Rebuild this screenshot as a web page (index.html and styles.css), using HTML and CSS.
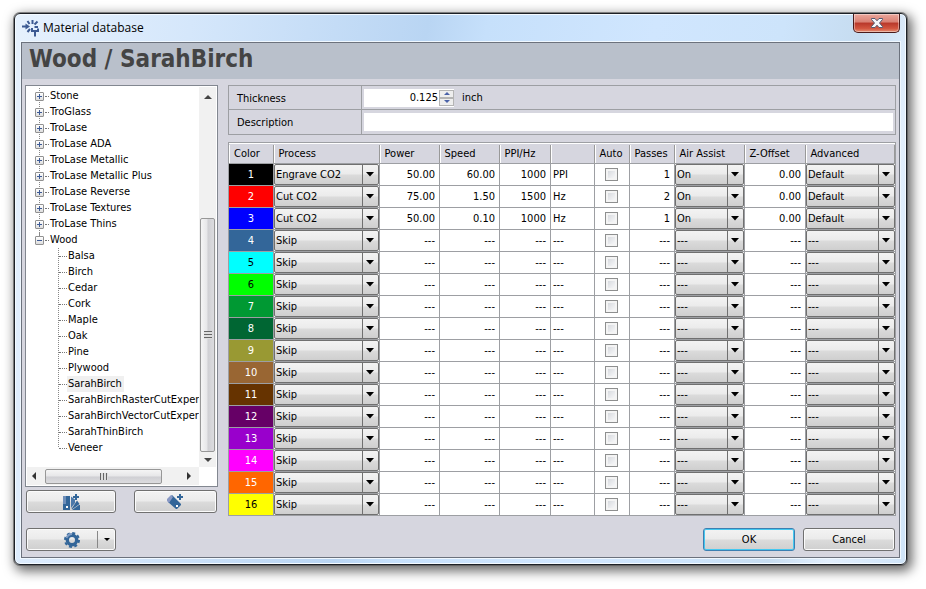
FILE: index.html
```html
<!DOCTYPE html>
<html lang="en">
<head>
<meta charset="utf-8">
<title>Material database</title>
<link rel="stylesheet" href="styles.css">
</head>
<body>
<main class="window">
  <header class="titlebar">
    <svg class="app-icon" width="17" height="17" viewBox="0 0 17 17" aria-hidden="true">
      <g fill="none" stroke="#3d5a92" stroke-width="2">
        <path d="M0 6.500h6M10.500 0v4M5.500 1l2 3M15.500 1.500l-3 3M12.500 7H16M5.500 12l2.500-3M13 11.500v5"/>
        <path d="M10 8v3h6V8.500"/>
      </g>
      <path d="M3.500 3.500l4.500 3-4.500 3z" fill="#3d5a92"/>
    </svg>
    <h1 class="title">Material database</h1>
    <button class="close" type="button" aria-label="Close">
      <svg width="12" height="10" viewBox="0 0 12 10" aria-hidden="true">
        <path d="M.5.5h3.500l2 2.300 2-2.300h3.500v1L8.500 5l3 3.500v1H8L6 7.200 4 9.500H.5v-1L3.500 5l-3-3.500z" fill="#f4f4f8" stroke="#545a70"/>
      </svg>
    </button>
  </header>
  <div class="client">
    <h2 class="heading">Wood / SarahBirch</h2>
    <div class="body">
      <aside class="side">
        <div class="tree-box">
          <ul class="tree" id="tree"></ul>
          <div class="vbar">
            <i class="arrow up"></i>
            <div class="vthumb"><i class="grip"></i></div>
            <i class="arrow down"></i>
          </div>
          <div class="hbar">
            <i class="arrow left"></i>
            <div class="hthumb"><i class="grip"></i></div>
            <i class="arrow right"></i>
          </div>
        </div>
        <div class="side-actions">
          <button class="btn add-material" type="button" aria-label="Add material">
            <svg width="17" height="16" viewBox="0 0 17 16" aria-hidden="true">
              <path d="M0 2h7v14H0z" fill="#336699"/>
              <path d="M0 2h3v8H0z" fill="#6f8fba"/>
              <path d="M8 2.500l4 3V9l-4 5z" fill="#4b78a9"/>
              <path d="M8.500 15l5.500-8.500 2.500 3.500-7 5z" fill="#336699"/>
              <path d="M9 16l7-5h1v5z" fill="#336699"/>
              <path d="M3 12h2v2H3z" fill="#fff"/>
              <path d="M12 0h2v2h2v2h-2v2h-2V4h-2V2h2z" fill="#336699"/>
            </svg>
          </button>
          <button class="btn add-thickness" type="button" aria-label="Add thickness">
            <svg width="17" height="16" viewBox="0 0 17 16" aria-hidden="true">
              <path d="M1 5l4-4 9 9v1l-4 4H9L1 8z" fill="#336699"/>
              <path d="M0 5l4-4 2 2-4 6-2-2z" fill="#8898c4"/>
              <path d="M9 11h2v2H9z" fill="#fff"/>
              <path d="M12 0h2v2h2v2h-2v2h-2V4h-2V2h2z" fill="#336699"/>
            </svg>
          </button>
        </div>
      </aside>
      <section class="main">
        <div class="props">
          <label class="prop-label" for="thickness">Thickness</label>
          <div class="prop-value">
            <span class="spin">
              <input id="thickness" class="spin-input" type="text" value="0.125">
              <span class="spin-buttons">
                <button class="spin-btn" type="button" aria-label="Increase"><i class="tri tri-up"></i></button>
                <button class="spin-btn" type="button" aria-label="Decrease"><i class="tri tri-down"></i></button>
              </span>
            </span>
            <span class="unit">inch</span>
          </div>
          <label class="prop-label" for="description">Description</label>
          <div class="prop-value"><input id="description" class="description" type="text"></div>
        </div>
        <table class="grid">
          <colgroup>
            <col class="c-color"><col class="c-process"><col class="c-num"><col class="c-num"><col class="c-ppi"><col class="c-unit"><col class="c-auto"><col class="c-passes"><col class="c-air"><col class="c-z"><col class="c-adv">
          </colgroup>
          <thead>
            <tr><th>Color</th><th>Process</th><th>Power</th><th>Speed</th><th>PPI/Hz</th><th></th><th>Auto</th><th>Passes</th><th>Air Assist</th><th>Z-Offset</th><th>Advanced</th></tr>
          </thead>
          <tbody id="rows"></tbody>
        </table>
      </section>
    </div>
    <footer class="footer">
      <div class="btn split">
        <button class="split-main" type="button" aria-label="Settings">
          <svg width="16" height="16" viewBox="0 0 16 16" aria-hidden="true">
            <circle cx="8" cy="8" r="4.700" fill="none" stroke="#336699" stroke-width="3.400"/>
            <circle cx="8" cy="8" r="7" fill="none" stroke="#336699" stroke-width="2" stroke-dasharray="3 2.500"/>
            <path d="M2.500 6A6 6 0 0 1 8 2" fill="none" stroke="#7f9cc4" stroke-width="2"/>
          </svg>
        </button>
        <button class="split-drop" type="button" aria-label="More settings"><i class="tri tri-drop"></i></button>
      </div>
      <div class="dialog-actions">
        <button class="btn ok" type="button">OK</button>
        <button class="btn cancel" type="button">Cancel</button>
      </div>
    </footer>
  </div>
</main>
<script src="app.js"></script>
</body>
</html>
```

FILE: styles.css
```css
* { box-sizing: border-box; }

body {
  margin: 0;
  padding: 13px 19px 24px 14px;
  background: #fff;
  color: #000;
  font: 11px/16px "DejaVu Sans Condensed", "DejaVu Sans", sans-serif;
}

button, input, select { font: inherit; color: inherit; margin: 0; }
h1, h2, ul { margin: 0; padding: 0; list-style: none; }

.window {
  display: flex;
  flex-direction: column;
  border: 1px solid #1c2026;
  border-radius: 6px;
  padding: 0 6px 6px;
  background: linear-gradient(100deg, #e6f1fd 0, #d5e7fb 18%, #b9d5f3 42%, #c6e0fb 48%, #d0e6fe 65%, #cde4fb 78%, #c6dcf0 86%, #e2effd 92%, #cfe4f8 100%);
  box-shadow: inset 0 0 0 1px #f4faff, 0 0 0 1px #555a, 3px 4px 12px 2px #0009;
}

.titlebar {
  display: flex;
  align-items: flex-start;
  height: 28px;
}
.app-icon { margin: 6px 4px 0 1px; }
.title {
  flex: 1;
  padding-top: 6px;
  font: 12px/16px "Open Sans", "Noto Sans", sans-serif;
}
.close {
  width: 47px;
  height: 19px;
  padding: 0;
  border: 1px solid #4a1a1a;
  border-top: 0;
  border-radius: 0 0 5px 5px;
  background: linear-gradient(#eba79c, #d98073 45%, #b8372a 50%, #d2553f 80%, #e58f74);
  box-shadow: inset 0 0 0 1px #fff6;
  line-height: 0;
}

.client {
  border: 1px solid #6c727d;
  background: #d6d6df;
  box-shadow: 0 0 0 1px #f0f8ff;
}
.heading {
  height: 36px;
  padding: 0 7px;
  background: #b9c0cb;
  color: #444;
  font: bold 24px/32px "DejaVu Sans Condensed", "DejaVu Sans", sans-serif;
}

.body { display: flex; gap: 10px; padding: 6px 3px 0; }
.side { flex: none; width: 193px; display: flex; flex-direction: column; gap: 3px; padding-bottom: 3px; }
.tree-box {
  flex: 1;
  display: grid;
  grid-template: minmax(0, 1fr) 18px / minmax(0, 1fr) 17px;
  border: 1px solid #828790;
  background: #fff;
  padding: 1px;
}
.tree { overflow: hidden; padding: 1px 0 0 8px; white-space: nowrap; }
.node { display: flex; align-items: center; height: 16px; }
.toggle {
  position: relative;
  width: 9px;
  height: 9px;
  flex: none;
  padding: 0;
  border: 1px solid #919191;
  border-radius: 1px;
  background: linear-gradient(#fff, #ddd);
}
.toggle::before, .toggle.plus::after {
  content: "";
  position: absolute;
  left: 1px;
  top: 3px;
  width: 5px;
  height: 1px;
  background: #3c5a96;
}
.toggle.plus::after { left: 3px; top: 1px; width: 1px; height: 5px; }
.stem { flex: none; width: 4px; border-top: 1px dotted #777; margin-left: 1px; }
.node-label { padding: 0 2px 0 1px; }
.parent { background: linear-gradient(#888 50%, transparent 50%) 4px 0 / 1px 2px repeat-y; }
.parent.last { background-size: 1px 8px; background-repeat: no-repeat; }
.child { margin-left: 23px; background: repeating-linear-gradient(#888 0 1px, transparent 1px 2px) 0 0 / 1px 100% no-repeat; }
.child .stem { width: 8px; }
.child:last-child { background-size: 1px 8px; }
.selected .node-label { background: #f0f0f0; }

.vbar, .hbar { display: flex; align-items: center; background: #f1f1f1; }
.vbar { flex-direction: column; padding: 8px 0 5px; }
.hbar { padding: 1px 8px 1px 5px; }
.vthumb, .hthumb {
  display: flex;
  align-items: center;
  justify-content: center;
  border: 1px solid #979797;
  border-radius: 2px;
}
.vthumb { width: 15px; height: 234px; margin: auto 0 6px; background: linear-gradient(90deg, #f5f5f5, #e6e6e8 48%, #cfcfd3 52%, #dcdcdf); }
.hthumb { width: 117px; height: 15px; margin: 0 auto 0 9px; background: linear-gradient(#f5f5f5, #e6e6e8 48%, #cfcfd3 52%, #dcdcdf); }
.vthumb .grip { width: 8px; height: 8px; background: repeating-linear-gradient(#666 0 1px, #ddd 1px 3px); }
.hthumb .grip { width: 8px; height: 7px; background: repeating-linear-gradient(90deg, #666 0 1px, #ddd 1px 3px); }
.arrow { border: 4px solid transparent; width: 0; height: 0; }
.up { border-top: 0; border-bottom-color: #444; }
.down { border-bottom: 0; border-top-color: #444; }
.left { border-left: 0; border-right-color: #333; }
.right { border-right: 0; border-left-color: #333; }

.btn {
  height: 23px;
  padding: 0;
  border: 1px solid #707070;
  border-radius: 3px;
  background: linear-gradient(#f3f3f3, #ebebeb 48%, #dbdbdb 52%, #cfcfcf);
  box-shadow: inset 0 0 0 1px #fbfbfb;
  line-height: 0;
}
.side-actions { display: flex; justify-content: space-between; padding: 0 1px; }
.add-material { width: 90px; }
.add-thickness { width: 83px; }

.main { flex: 1; min-width: 0; }
.props {
  display: grid;
  grid-template: 23px 24px / 132px minmax(0, 1fr);
  gap: 1px;
  border: 1px solid #9d9fa3;
  background: #9d9fa3;
  margin-bottom: 7px;
}
.prop-label { padding: 5px 8px; background: #d6d6df; }
.prop-value { display: flex; align-items: center; gap: 8px; padding: 0 2px; background: #d6d6df; }
.spin { display: flex; width: 90px; height: 18px; background: #fff; }
.spin-input { flex: 1; min-width: 0; padding: 0; border: 0; background: none; text-align: right; }
.spin-buttons { display: flex; flex-direction: column; width: 15px; padding: 1px 0; margin-left: 1px; }
.spin-btn {
  display: flex;
  flex: 1;
  align-items: center;
  justify-content: center;
  padding: 0;
  border: 1px solid #b4b4b4;
  background: #eee;
}
.tri { width: 0; height: 0; border: 3px solid transparent; }
.tri-up { border-top: 0; border-bottom-color: #4a62a8; }
.tri-down { border-bottom: 0; border-top-color: #4a62a8; }
.tri-drop { border-bottom: 0; border-top-color: #000; }
.description { width: 100%; height: 18px; border: 0; background: #fff; }

.grid {
  width: 100%;
  table-layout: fixed;
  border-collapse: collapse;
  border: 1px solid #9d9fa3;
}
.c-color { width: 45px; }
.c-process { width: 106px; }
.c-num { width: 60px; }
.c-ppi { width: 51px; }
.c-unit { width: 44px; }
.c-auto { width: 35px; }
.c-passes { width: 45px; }
.c-air { width: 70px; }
.c-z { width: 61px; }
.c-adv { width: 90px; }
.grid th {
  height: 21px;
  padding: 2px 5px 0;
  background: linear-gradient(#999 0 0) 100% 2px / 1px 100% no-repeat, linear-gradient(#fff 0 0) 0 2px / 1px 100% no-repeat, #d6d6df;
  box-shadow: inset 0 1px #fff;
  font-weight: normal;
  text-align: left;
  white-space: nowrap;
}
.grid td {
  height: 22px;
  padding: 0 2px;
  border: 1px solid #9d9fa3;
  background: #fff;
}
.grid .num { padding-right: 4px; text-align: right; }
.grid .swatch { background: var(--swatch); color: #fff; text-align: center; }
.grid .swatch.light { color: #000; }
.grid .check { padding: 0 1px 0 0; line-height: 0; text-align: center; }
.grid .pick { padding: 0; }
.box {
  appearance: none;
  width: 13px;
  height: 13px;
  vertical-align: middle;
  border: 1px solid #8e8f8f;
  background: linear-gradient(135deg, #cfd2d8, #fff);
  box-shadow: inset 0 0 0 2px #f4f4f4;
}
.select {
  appearance: none;
  display: block;
  width: 100%;
  height: 21px;
  padding: 0 16px 0 1px;
  border: 1px solid #707070;
  border-radius: 2px;
  background:
    url("data:image/svg+xml,%3Csvg xmlns='http://www.w3.org/2000/svg' width='16' height='19'%3E%3Cpath d='M.5 0v19' stroke='%23707070'/%3E%3Cpath d='M4 7h8l-4 4.500z'/%3E%3C/svg%3E") right 0 top 0 no-repeat,
    linear-gradient(#f3f3f3, #ebebeb 48%, #dbdbdb 52%, #cfcfcf);
  line-height: 16px;
}

.footer { display: flex; justify-content: space-between; padding: 12px 4px 6px; }
.split { display: flex; align-items: center; width: 90px; }
.split button { height: 17px; border: 0; padding: 0; background: none; line-height: 0; }
.split .split-main { flex: 1; padding-left: 20px; }
.split .split-drop { display: flex; align-items: center; justify-content: center; width: 18px; border-left: 1px solid #888; }
.dialog-actions { display: flex; gap: 8px; }
.dialog-actions .btn { width: 92px; line-height: 16px; }
.dialog-actions .ok { border-color: #3c7fb1; box-shadow: inset 0 0 0 1px #45c8f0; }
```

FILE: app.js
```js
const parents = ["Stone", "TroGlass", "TroLase", "TroLase ADA", "TroLase Metallic", "TroLase Metallic Plus",
  "TroLase Reverse", "TroLase Textures", "TroLase Thins", "Wood"];
const children = ["Balsa", "Birch", "Cedar", "Cork", "Maple", "Oak", "Pine", "Plywood", "SarahBirch",
  "SarahBirchRasterCutExperi", "SarahBirchVectorCutExperi", "SarahThinBirch", "Veneer"];

document.getElementById("tree").innerHTML =
  parents.map(name => `<li class="node parent${name === "Wood" ? " last" : ""}"><button type="button" class="toggle${name === "Wood" ? "" : " plus"}" aria-label="Toggle ${name}"></button><i class="stem"></i><span class="node-label">${name}</span></li>`).join("") +
  children.map(name => `<li class="node child${name === "SarahBirch" ? " selected" : ""}"><i class="stem"></i><span class="node-label">${name}</span></li>`).join("");

const colors = ["#000000", "#ff0000", "#0000ff", "#336699", "#00ffff", "#00ff00", "#009933", "#006633",
  "#999933", "#996633", "#663300", "#660066", "#9900cc", "#ff00ff", "#ff6600", "#ffff00"];
const lightRows = [5, 6, 16];
const settings = [
  ["Engrave CO2", "50.00", "60.00", "1000", "PPI", "1", "On", "0.00", "Default"],
  ["Cut CO2", "75.00", "1.50", "1500", "Hz", "2", "On", "0.00", "Default"],
  ["Cut CO2", "50.00", "0.10", "1000", "Hz", "1", "On", "0.00", "Default"]
];
const skipped = ["Skip", "---", "---", "---", "---", "---", "---", "---", "---"];

const pick = (label, row, value) =>
  `<td class="pick"><select class="select" aria-label="${label} ${row}"><option>${value}</option></select></td>`;
const num = value => `<td class="num">${value}</td>`;

document.getElementById("rows").innerHTML = colors.map((color, i) => {
  const n = i + 1;
  const [process, power, speed, ppi, unit, passes, air, z, advanced] = settings[i] || skipped;
  return `<tr><td class="swatch${lightRows.includes(n) ? " light" : ""}" style="--swatch:${color}">${n}</td>` +
    pick("Process", n, process) + num(power) + num(speed) + num(ppi) + `<td>${unit}</td>` +
    `<td class="check"><input class="box" type="checkbox" aria-label="Auto ${n}"></td>` +
    num(passes) + pick("Air Assist", n, air) + num(z) + pick("Advanced", n, advanced) + `</tr>`;
}).join("");
```
